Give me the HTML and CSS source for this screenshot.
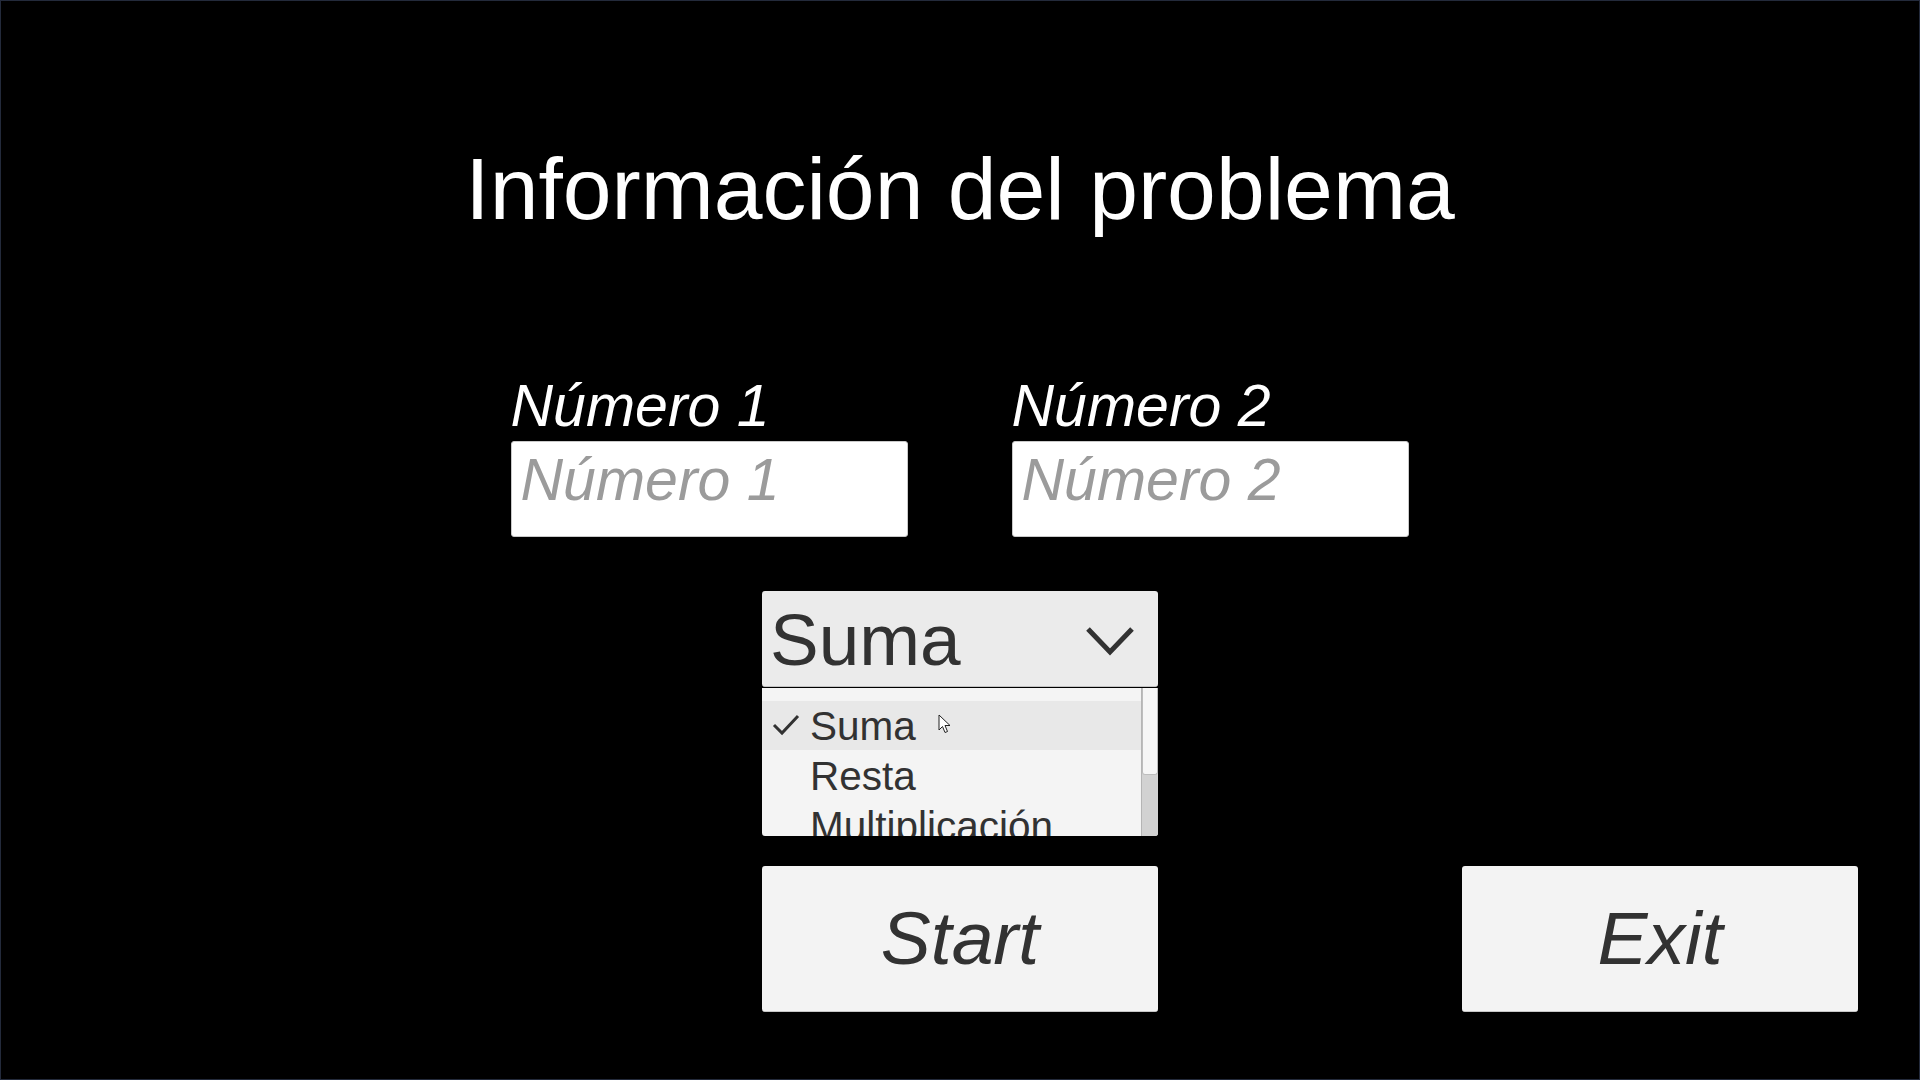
FILE: index.html
```html
<!DOCTYPE html>
<html lang="es">
<head>
<meta charset="utf-8">
<title>Información del problema</title>
<link rel="stylesheet" href="styles.css">
</head>
<body>
<div class="screen">
  <h1 class="title">Información del problema</h1>

  <div class="fields">
    <div class="field">
      <div class="label">Número 1</div>
      <div class="input"><span class="placeholder">Número 1</span></div>
    </div>
    <div class="field">
      <div class="label">Número 2</div>
      <div class="input"><span class="placeholder">Número 2</span></div>
    </div>
  </div>

  <div class="dropdown-wrap">
    <div class="dropdown">
      <span class="dropdown-value">Suma</span>
      <svg class="chevron" width="50" height="30" viewBox="0 0 50 30"><polyline points="3,3 25,26 47,3" fill="none" stroke="#323232" stroke-width="5"/></svg>
    </div>
    <div class="menu">
      <div class="menu-items">
        <div class="item selected">
          <svg class="check" width="28" height="22" viewBox="0 0 28 22"><polyline points="2,11 10,19 26,2" fill="none" stroke="#323232" stroke-width="3"/></svg>
          <span>Suma</span>
        </div>
        <div class="item"><span>Resta</span></div>
        <div class="item"><span>Multiplicación</span></div>
      </div>
      <div class="scrollbar"><div class="handle"></div></div>
      <svg class="cursor" width="14" height="20" viewBox="0 0 14 20"><path d="M1,1 L1,16 L4.5,12.5 L7,18.5 L9.5,17.5 L7,11.5 L12,11.5 Z" fill="#fff" stroke="#222" stroke-width="1"/></svg>
    </div>
  </div>

  <div class="buttons">
    <div class="button start">Start</div>
    <div class="button exit">Exit</div>
  </div>
</div>
</body>
</html>
```

FILE: styles.css
```css
html, body {
  margin: 0;
  padding: 0;
  background: #000;
}

.screen {
  width: 1920px;
  height: 1080px;
  box-sizing: border-box;
  border: 1px solid #232a3b;
  background: #000;
  font-family: "Liberation Sans", Arial, sans-serif;
  display: flex;
  flex-direction: column;
  align-items: center;
  overflow: hidden;
}

.title {
  margin: 145px 0 0 0;
  font-size: 87.7px;
  line-height: 87px;
  font-weight: normal;
  color: #fff;
  text-align: center;
}

.fields {
  margin-top: 144px;
  display: flex;
  gap: 104px;
  margin-right: 1px;
}

.field {
  width: 397px;
  display: flex;
  flex-direction: column;
  gap: 6px;
}

.label {
  font-size: 59px;
  line-height: 58px;
  font-style: italic;
  color: #fff;
  padding-left: 0;
}

.input {
  height: 96px;
  box-sizing: border-box;
  background: #fff;
  border: 1px solid #c9c9c9;
  border-radius: 3px;
  padding: 9px 0 0 9px;
}

.placeholder {
  font-size: 59px;
  line-height: 58px;
  font-style: italic;
  color: #9b9b9b;
}

.dropdown-wrap {
  margin-top: 54px;
  width: 396px;
  position: relative;
}

.dropdown {
  height: 96px;
  box-sizing: border-box;
  background: #ebebeb;
  border-radius: 3px;
  border-bottom: 1px solid #c2c2c2;
  display: flex;
  align-items: flex-start;
  justify-content: space-between;
  padding: 12px 23px 0 8px;
}

.dropdown-value {
  font-size: 73px;
  line-height: 73px;
  color: #323232;
}

.chevron {
  margin-top: 23px;
}

.menu {
  height: 148px;
  margin-top: 1px;
  background: #f4f4f4;
  border-radius: 0 0 3px 3px;
  display: flex;
  overflow: hidden;
  position: relative;
}

.menu-items {
  flex: 1;
  padding-top: 13px;
}

.item {
  height: 50px;
  display: flex;
  align-items: center;
  padding-left: 48px;
  font-size: 40.5px;
  line-height: 50px;
  color: #323232;
  position: relative;
  box-sizing: border-box;
  white-space: nowrap;
}

.item span {
  position: relative;
  top: 0;
}

.item.selected {
  background: #e8e8e8;
  height: 49px;
  margin-bottom: 1px;
}

.check {
  position: absolute;
  left: 10px;
  top: 13px;
}

.scrollbar {
  width: 16px;
  background: #d2d2d2;
  border-left: 1px solid #b5b5b5;
  display: flex;
  flex-direction: column;
}

.handle {
  height: 87px;
  background: #f6f6f6;
  border: 1px solid #bdbdbd;
  border-top: none;
  border-radius: 0 0 3px 3px;
  box-sizing: border-box;
}

.cursor {
  position: absolute;
  left: 176px;
  top: 26px;
}

.buttons {
  margin-top: 30px;
  width: 1920px;
  display: grid;
  grid-template-columns: 1fr 396px 1fr;
}

.button {
  height: 146px;
  width: 396px;
  box-sizing: border-box;
  background: #f3f3f3;
  border-radius: 3px;
  border-bottom: 1px solid #c6c6c6;
  display: flex;
  align-items: center;
  justify-content: center;
  font-size: 75px;
  line-height: 75px;
  font-style: italic;
  color: #323232;
}

.start {
  grid-column: 2;
}

.exit {
  grid-column: 3;
  margin-left: 304px;
}
```
